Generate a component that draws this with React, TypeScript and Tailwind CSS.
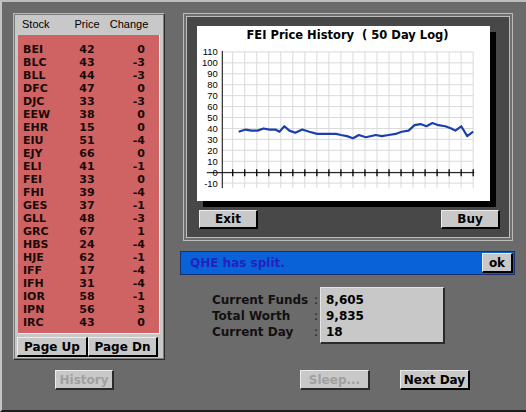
import React from 'react';

const stocks: [string, number, number][] = [
  ['BEI', 42, 0],
  ['BLC', 43, -3],
  ['BLL', 44, -3],
  ['DFC', 47, 0],
  ['DJC', 33, -3],
  ['EEW', 38, 0],
  ['EHR', 15, 0],
  ['EIU', 51, -4],
  ['EJY', 66, 0],
  ['ELI', 41, -1],
  ['FEI', 33, 0],
  ['FHI', 39, -4],
  ['GES', 37, -1],
  ['GLL', 48, -3],
  ['GRC', 67, 1],
  ['HBS', 24, -4],
  ['HJE', 62, -1],
  ['IFF', 17, -4],
  ['IFH', 31, -4],
  ['IOR', 58, -1],
  ['IPN', 56, 3],
  ['IRC', 43, 0],
];

// price history, [page x, value]
const history: [number, number][] = [
  [239, 37], [246, 39], [252, 38], [258, 38], [264, 40], [270, 39], [276, 39],
  [280, 37], [285, 42], [290, 38], [296, 36], [303, 39], [310, 37], [318, 35],
  [327, 35], [337, 35], [342, 34], [348, 33], [354, 31], [360, 34], [367, 32],
  [377, 34], [383, 33], [390, 34], [397, 35], [403, 37], [410, 38], [416, 43],
  [422, 44], [428, 42], [434, 45], [440, 43], [447, 42], [453, 40], [457, 38],
  [463, 42], [469, 33], [475, 37],
];

const yOf = (v: number) => 130 - v * 1.1;
const gridX = Array.from({ length: 21 }, (_, i) => 35 + i * 12.1);
const gridV = [110, 100, 90, 80, 70, 60, 50, 40, 30, 20, 10, 0, -10];

const btn =
  "flex items-center justify-center bg-[#c8c8c8] border-t border-l border-[#ececec] border-r-2 border-b-2 border-r-black border-b-black text-[12px] font-bold text-black font-['DejaVu_Sans',sans-serif]";
const btnOff =
  "flex items-center justify-center bg-[#c8c8c8] border-t border-l border-[#ececec] border-r-2 border-b-2 border-r-[#2a2a2a] border-b-[#2a2a2a] text-[12px] font-bold text-[#a0a0a0] font-['DejaVu_Sans',sans-serif]";

function PriceChart() {
  const pts = history.map(([x, v]) => `${x - 198},${yOf(v).toFixed(1)}`).join(' ');
  return (
    <svg width="293" height="159" viewBox="0 0 293 159" className="block">
      {gridV.map((v) => (
        <line key={v} x1="24" x2="277" y1={yOf(v)} y2={yOf(v)} stroke="#dadada" strokeWidth="1" />
      ))}
      {gridX.map((x) => (
        <line key={x} x1={x} x2={x} y1="9" y2="146" stroke="#dadada" strokeWidth="1" />
      ))}
      <line x1="24.5" x2="24.5" y1="8" y2="146" stroke="#000" strokeWidth="1" />
      <line x1="9" x2="278" y1="130.5" y2="130.5" stroke="#000" strokeWidth="1" />
      {gridX.map((x) => (
        <line key={'t' + x} x1={x} x2={x} y1="127" y2="134" stroke="#000" strokeWidth="1.3" />
      ))}
      {gridV.map((v) => (
        <text
          key={'l' + v}
          x="20"
          y={yOf(v) + 3.5}
          textAnchor="end"
          fontSize="9.5"
          fontFamily="'Liberation Sans', sans-serif"
          fill="#000"
        >
          {v}
        </text>
      ))}
      <polyline points={pts} fill="none" stroke="#1c3fae" strokeWidth="2.2" strokeLinejoin="round" />
    </svg>
  );
}

export default function App() {
  return (
    <div className="w-[526px] h-[412px] overflow-hidden bg-[#6b6b6b] border-l-2 border-t-2 border-b-2 border-l-[#c4c4c4] border-t-[#bdbdbd] border-b-[#1e1e1e] flex">
      {/* Left: stock list */}
      <div className="ml-[11px] mt-[11px] flex flex-col">
        <div className="w-[152px] h-[347px] border border-t-[#b8b8b8] border-l-[#b8b8b8] border-r-[#2a2a2a] border-b-[#2a2a2a] p-[1px] bg-[#7c7c7c]">
          <div className="h-full bg-[#c8c8c8] flex flex-col">
            <div className="h-[18px] flex items-center text-[11px] text-black font-['Liberation_Sans',sans-serif]">
              <span className="pl-[7px] w-[55px]">Stock</span>
              <span className="w-[34px] text-center">Price</span>
              <span className="w-[50px] text-center">Change</span>
            </div>
            <div className="mt-[2px] mx-[3px] h-[299px] bg-[#cf6363] border-r border-b border-[#f0f0f0] pt-[8px] font-['DejaVu_Sans',sans-serif] font-bold text-[11px] text-[#1a0a0a]">
              {stocks.map(([sym, price, chg]) => (
                <div key={sym} className="h-[13px] flex items-center leading-none">
                  <span className="pl-[5px] w-[50px]">{sym}</span>
                  <span className="w-[38px] text-center">{price}</span>
                  <span className="w-[39px] text-right">{chg}</span>
                </div>
              ))}
            </div>
            <div className="mt-[3px] ml-[2px] flex">
              <div className={`${btn} w-[71px] h-[20px]`}>Page Up</div>
              <div className={`${btn} w-[70px] h-[20px]`}>Page Dn</div>
            </div>
          </div>
        </div>
        <div className={`${btnOff} mt-[10px] ml-[42px] w-[59px] h-[20px]`}>History</div>
      </div>

      {/* Right side */}
      <div className="ml-[15px] mt-[11px] w-[335px] flex flex-col">
        <div className="ml-[3px] w-[330px] h-[228px] border border-[#bcbcbc] p-[2px] bg-[#6e6e6e]">
          <div className="h-full border border-[#bcbcbc] bg-[#484848] pt-[9px] pl-[10px] pr-[9px] flex flex-col">
            <div className="w-[293px] h-[175px] bg-white shadow-[6px_6px_0_0_#000] flex flex-col">
              <div className="h-[17px] pt-[2px] pl-[8px] text-center text-[11.5px] font-bold text-black font-['DejaVu_Sans',sans-serif] leading-[15px]">
                FEI Price History&nbsp; ( 50 Day Log)
              </div>
              <PriceChart />
            </div>
            <div className="mt-[9px] flex justify-between pl-[2px]">
              <div className={`${btn} w-[59px] h-[19px]`}>Exit</div>
              <div className={`${btn} w-[59px] h-[19px]`}>Buy</div>
            </div>
          </div>
        </div>

        <div className="mt-[10px] h-[24px] bg-[#0a62d8] border border-[#163070] flex items-center justify-between pl-[9px] pr-[1px]">
          <span className="text-[12px] font-bold text-[#2222c0] font-['DejaVu_Sans',sans-serif]">QHE has split.</span>
          <div className={`${btn} w-[31px] h-[20px]`}>ok</div>
        </div>

        <div className="mt-[12px] flex">
          <div className="ml-[32px] pt-[5px] w-[108px] font-['DejaVu_Sans',sans-serif] font-bold text-[12px] text-[#111]">
            {[
              ['Current Funds', ':'],
              ['Total Worth', ':'],
              ['Current Day', ':'],
            ].map(([l, c]) => (
              <div key={l} className="h-[16px] flex items-center justify-between pr-[2px]">
                <span>{l}</span>
                <span className="font-normal">{c}</span>
              </div>
            ))}
          </div>
          <div className="w-[125px] h-[57px] bg-[#c8c8c8] border-t border-l border-[#e4e4e4] border-r-2 border-b-2 border-r-[#2a2a2a] border-b-[#2a2a2a] pt-[4px] pl-[5px] font-['DejaVu_Sans',sans-serif] font-bold text-[12px] text-black">
            <div className="h-[16px] flex items-center">8,605</div>
            <div className="h-[16px] flex items-center">9,835</div>
            <div className="h-[16px] flex items-center">18</div>
          </div>
        </div>

        <div className="mt-[26px] ml-[120px] flex gap-[30px]">
          <div className={`${btnOff} w-[70px] h-[20px]`}>Sleep...</div>
          <div className={`${btn} w-[70px] h-[20px]`}>Next Day</div>
        </div>
      </div>
    </div>
  );
}
